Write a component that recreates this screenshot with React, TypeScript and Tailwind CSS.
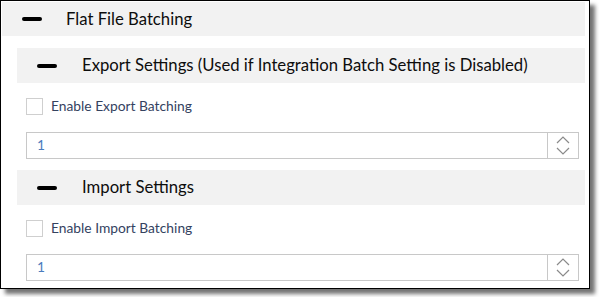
import { useState } from 'react'

function Minus() {
  return <div className="h-[4px] w-[20px] shrink-0 rounded-full bg-black" />
}

function SectionHeader({ title, top }: { title: string; top?: boolean }) {
  return (
    <div
      className={
        top
          ? 'flex h-[34px] items-center gap-[24px] bg-[#f2f2f2] pl-[20px]'
          : 'flex h-[35px] items-center gap-[25px] bg-[#f2f2f2] pl-[20px]'
      }
    >
      <Minus />
      <span className="text-[16.7px] leading-none text-[#0d0d0d]">{title}</span>
    </div>
  )
}

function Spinner() {
  return (
    <div className="flex w-[31px] flex-col items-center justify-center gap-[3px] border-l border-[#c8c8c8]">
      <svg width="14" height="8" viewBox="0 0 14 8" fill="none" stroke="#8a8a8a" strokeWidth="1.2">
        <path d="M1 7 L7 1 L13 7" />
      </svg>
      <svg width="14" height="8" viewBox="0 0 14 8" fill="none" stroke="#8a8a8a" strokeWidth="1.2">
        <path d="M1 1 L7 7 L13 1" />
      </svg>
    </div>
  )
}

function BatchingGroup({ label }: { label: string }) {
  const [checked, setChecked] = useState(false)
  return (
    <div className="pl-[9px] pr-[6px]">
      <label className="mt-[15px] flex h-[17px] items-center gap-[8px]">
        <input
          type="checkbox"
          checked={checked}
          onChange={() => setChecked(!checked)}
          className="h-[17px] w-[17px] appearance-none border border-[#cfcfcf] bg-white"
        />
        <span className="text-[13.8px] text-[#34425f]">{label}</span>
      </label>
      <div className="mt-[17px] flex h-[27px] border border-[#c8c8c8] bg-white">
        <div className="flex flex-1 items-center pl-[10px] text-[13.8px] text-[#4a7bbd]">1</div>
        <Spinner />
      </div>
    </div>
  )
}

export default function App() {
  return (
    <div className="h-[297px] w-[599px] bg-white font-['Lato',sans-serif]">
      <div className="h-[289px] w-[590px] border border-black bg-white shadow-[5px_5px_4px_rgba(0,0,0,0.55)]">
        <div className="ml-[1px] mr-[4px] mt-[1px]">
          <SectionHeader title="Flat File Batching" top />
        </div>
        <div className="pl-[16px] pr-[4px]">
          <div className="mt-[12px]">
            <SectionHeader title="Export Settings (Used if Integration Batch Setting is Disabled)" />
          </div>
          <BatchingGroup label="Enable Export Batching" />
          <div className="mt-[11px]">
            <SectionHeader title="Import Settings" />
          </div>
          <BatchingGroup label="Enable Import Batching" />
        </div>
      </div>
    </div>
  )
}
